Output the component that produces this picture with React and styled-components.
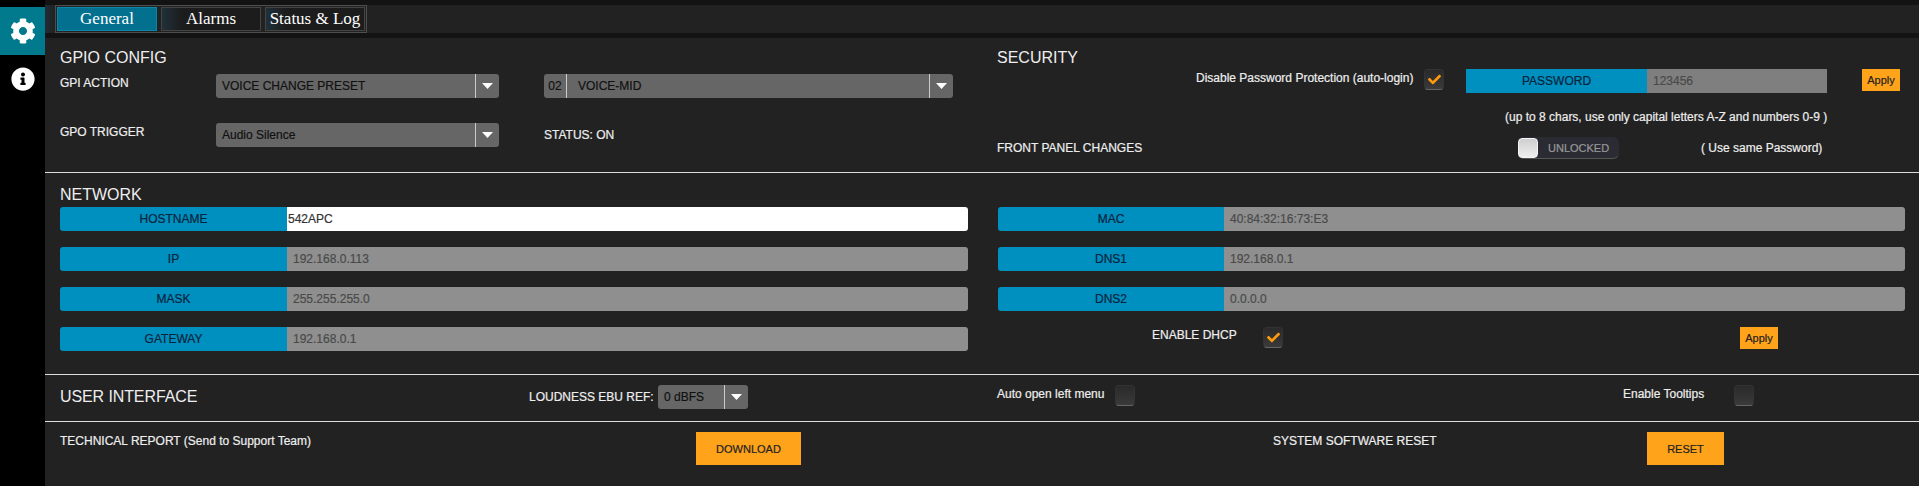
import React from "react";
import styled, { createGlobalStyle } from "styled-components";
import { FaCog, FaInfoCircle, FaCheck } from "react-icons/fa";

const GlobalStyle = createGlobalStyle`
  html, body {
    margin: 0;
    padding: 0;
    background: #000;
    font-family: "Liberation Sans", Arial, sans-serif;
  }
`;

const leftFields = [
  { label: "HOSTNAME", value: "542APC", editable: true },
  { label: "IP", value: "192.168.0.113" },
  { label: "MASK", value: "255.255.255.0" },
  { label: "GATEWAY", value: "192.168.0.1" },
];

const rightFields = [
  { label: "MAC", value: "40:84:32:16:73:E3" },
  { label: "DNS1", value: "192.168.0.1" },
  { label: "DNS2", value: "0.0.0.0" },
];

const Select = ({ value, prefix, width }) => (
  <SelectBox $width={width}>
    {prefix && <SelectPrefix>{prefix}</SelectPrefix>}
    <SelectValue $indent={prefix ? 11 : 6}>{value}</SelectValue>
    <SelectArrow>
      <svg width="11" height="6" viewBox="0 0 11 6">
        <path d="M0 0h11L5.5 6z" fill="#fff" />
      </svg>
    </SelectArrow>
  </SelectBox>
);

const Check = ({ checked }) => (
  <CheckBox>{checked && <FaCheck size={13} color="#ff9a0d" />}</CheckBox>
);

const Field = ({ label, value, editable, labelWidth }) => (
  <FieldRow>
    <FieldLabel $width={labelWidth}>{label}</FieldLabel>
    <FieldValue $editable={editable}>{value}</FieldValue>
  </FieldRow>
);

const App = () => {
  return (
    <Page>
      <GlobalStyle />
      <Sidebar>
        <SideItem $active>
          <FaCog size={26} />
        </SideItem>
        <SideItem>
          <FaInfoCircle size={24} />
        </SideItem>
      </Sidebar>
      <Main>
        <DarkStrip />
        <TabBar>
          <TabGroup>
            <Tab $active>General</Tab>
            <Tab>Alarms</Tab>
            <Tab>Status &amp; Log</Tab>
          </TabGroup>
        </TabBar>
        <DarkStrip />

        <TopSection>
          <Column>
            <Heading>GPIO CONFIG</Heading>
            <GpioGrid>
              <GpioLabel>GPI ACTION</GpioLabel>
              <Select value="VOICE CHANGE PRESET" />
              <PresetCell>
                <Select value="VOICE-MID" prefix="02" />
              </PresetCell>
              <GpioLabel>GPO TRIGGER</GpioLabel>
              <Select value="Audio Silence" />
              <PresetCell>
                <Label>STATUS: ON</Label>
              </PresetCell>
            </GpioGrid>
          </Column>
          <Column>
            <Heading>SECURITY</Heading>
            <PasswordRow>
              <DisableLabel>Disable Password Protection (auto-login)</DisableLabel>
              <Check checked />
              <PasswordBox>
                <PasswordLabel>PASSWORD</PasswordLabel>
                <PasswordValue>123456</PasswordValue>
              </PasswordBox>
              <ApplyButton>Apply</ApplyButton>
            </PasswordRow>
            <Hint>(up to 8 chars, use only capital letters A-Z and numbers 0-9 )</Hint>
            <PanelRow>
              <PanelLabel>FRONT PANEL CHANGES</PanelLabel>
              <Toggle>
                <ToggleKnob />
                <ToggleText>UNLOCKED</ToggleText>
              </Toggle>
              <SamePassword>( Use same Password)</SamePassword>
            </PanelRow>
          </Column>
        </TopSection>

        <NetworkSection>
          <Column>
            <NetworkHeading>NETWORK</NetworkHeading>
            <FieldStack $width={908}>
              {leftFields.map((f) => (
                <Field key={f.label} {...f} labelWidth={227} />
              ))}
            </FieldStack>
          </Column>
          <RightNetwork>
            <FieldStack $width={907}>
              {rightFields.map((f) => (
                <Field key={f.label} {...f} labelWidth={226} />
              ))}
            </FieldStack>
            <DhcpRow>
              <DhcpLabel>ENABLE DHCP</DhcpLabel>
              <Check checked />
              <DhcpApply>Apply</DhcpApply>
            </DhcpRow>
          </RightNetwork>
        </NetworkSection>

        <InterfaceSection>
          <InterfaceLeft>
            <InterfaceHeading>USER INTERFACE</InterfaceHeading>
            <LoudnessLabel>LOUDNESS EBU REF:</LoudnessLabel>
            <Select value="0 dBFS" width={90} />
          </InterfaceLeft>
          <InterfaceRight>
            <AutoOpen>
              <BottomLabel>Auto open left menu</BottomLabel>
              <Check />
            </AutoOpen>
            <Tooltips>
              <BottomLabel>Enable Tooltips</BottomLabel>
              <Check />
            </Tooltips>
          </InterfaceRight>
        </InterfaceSection>

        <BottomSection>
          <ReportCell>
            <BottomLabel>TECHNICAL REPORT (Send to Support Team)</BottomLabel>
            <BigButton $width={105}>DOWNLOAD</BigButton>
          </ReportCell>
          <ResetCell>
            <BottomLabel>SYSTEM SOFTWARE RESET</BottomLabel>
            <BigButton $width={77}>RESET</BigButton>
          </ResetCell>
        </BottomSection>
      </Main>
    </Page>
  );
};

const Page = styled.div`
  display: flex;
  width: 1919px;
  height: 486px;
  overflow: hidden;
  color: #eee;
  font-size: 12px;
  -webkit-text-stroke: 0.2px currentColor;
`;

const Sidebar = styled.nav`
  width: 45px;
  flex-shrink: 0;
  padding-top: 7px;
  background: #000;
  display: flex;
  flex-direction: column;
`;

const SideItem = styled.div`
  height: 48px;
  display: flex;
  align-items: center;
  justify-content: center;
  color: #fff;
  background: ${(p) => (p.$active ? "#007a8c" : "transparent")};
`;

const Main = styled.main`
  flex: 1;
  background: #222;
  display: flex;
  flex-direction: column;
`;

const DarkStrip = styled.div`
  height: 5px;
  background: #131313;
`;

const TabBar = styled.div`
  height: 28px;
  padding-left: 10px;
  background: linear-gradient(90deg, #1f2c36, #222 10px);
`;

const TabGroup = styled.div`
  display: inline-flex;
  gap: 4px;
  height: 28px;
  box-sizing: border-box;
  padding: 1px;
  border: 1px solid #4e4e4e;
`;

const Tab = styled.div`
  width: 100px;
  box-sizing: border-box;
  display: flex;
  align-items: center;
  justify-content: center;
  font-family: "Liberation Serif", "Times New Roman", serif;
  font-size: 17px;
  color: #fff;
  -webkit-text-stroke: 0;
  background: ${(p) =>
    p.$active ? "#04708f" : "linear-gradient(90deg, #20303a, #1c1c1c 20px)"};
  border: 1px solid ${(p) => (p.$active ? "#0a86a8" : "#444")};
`;

const TopSection = styled.section`
  height: 134px;
  display: grid;
  grid-template-columns: 937px 1fr;
  padding-left: 15px;
  border-bottom: 1px solid #ddd;
`;

const Column = styled.div`
  min-width: 0;
`;

const Heading = styled.h2`
  margin: 11px 0 0;
  font-size: 16px;
  line-height: 18px;
  font-weight: 400;
  color: #eee;
  -webkit-text-stroke: 0;
`;

const GpioGrid = styled.div`
  display: grid;
  grid-template-columns: 156px 283px 454px;
  row-gap: 25px;
  margin-top: 7px;
`;

const Label = styled.span`
  font-size: 12px;
  line-height: 17px;
  color: #eee;
  white-space: nowrap;
`;

const GpioLabel = styled(Label)`
  padding-top: 1px;
`;

const PresetCell = styled.div`
  display: flex;
  flex-direction: column;
  justify-content: center;
  padding-left: 45px;
`;

const SelectBox = styled.div`
  display: flex;
  align-items: stretch;
  height: 24px;
  box-sizing: border-box;
  width: ${(p) => (p.$width ? `${p.$width}px` : "auto")};
  background: #666;
  border-radius: 3px;
  color: #111;
  font-size: 12px;
  line-height: 24px;
`;

const SelectPrefix = styled.span`
  width: 23px;
  box-sizing: border-box;
  text-align: center;
  border-right: 1px solid #ccc;
`;

const SelectValue = styled.span`
  flex: 1;
  padding-left: ${(p) => p.$indent}px;
  white-space: nowrap;
`;

const SelectArrow = styled.span`
  width: 24px;
  box-sizing: border-box;
  display: flex;
  align-items: center;
  justify-content: center;
  border-left: 1px solid #ccc;
`;

const PasswordRow = styled.div`
  display: flex;
  align-items: flex-start;
  margin-top: 2px;
  padding-left: 199px;
`;

const DisableLabel = styled(Label)`
  width: 228px;
  margin-top: 1px;
`;

const CheckBox = styled.span`
  width: 20px;
  height: 21px;
  flex-shrink: 0;
  display: flex;
  align-items: center;
  justify-content: center;
  box-sizing: border-box;
  border-radius: 4px;
  background: linear-gradient(#2a2a2a, #3a3a3a);
  border: 1px solid #333;
  border-bottom-color: #666;
`;

const PasswordBox = styled.div`
  display: flex;
  width: 361px;
  height: 24px;
  margin-left: 22px;
  line-height: 24px;
`;

const PasswordLabel = styled.span`
  width: 181px;
  text-align: center;
  background: #0090bf;
  color: #08233c;
`;

const PasswordValue = styled.span`
  flex: 1;
  padding-left: 6px;
  background: #7f7f7f;
  color: #4a4a4a;
`;

const ApplyButton = styled.button`
  width: 38px;
  height: 22px;
  margin-left: 35px;
  padding: 0;
  border: none;
  background: #ffa31a;
  color: #222;
  font-family: inherit;
  font-size: 11px;
`;

const Hint = styled.div`
  margin: 16px 0 0 508px;
  line-height: 17px;
  white-space: nowrap;
`;

const PanelRow = styled.div`
  display: flex;
  align-items: center;
  height: 22px;
  margin-top: 11px;
`;

const PanelLabel = styled(Label)`
  width: 521px;
`;

const Toggle = styled.div`
  width: 101px;
  height: 22px;
  box-sizing: border-box;
  display: flex;
  align-items: center;
  border-radius: 6px;
  background: #2b2b33;
  border-bottom: 1px solid #555;
`;

const ToggleKnob = styled.span`
  width: 20px;
  height: 20px;
  box-sizing: border-box;
  border-radius: 4px;
  border: 1px solid #f4f4f4;
  background: linear-gradient(#cfcfcf, #eee);
`;

const ToggleText = styled.span`
  margin-left: 10px;
  font-size: 11px;
  color: #999;
`;

const SamePassword = styled(Label)`
  margin-left: 82px;
`;

const NetworkSection = styled.section`
  height: 201px;
  display: grid;
  grid-template-columns: 937px 1fr;
  padding-left: 15px;
  border-bottom: 1px solid #ddd;
`;

const NetworkHeading = styled(Heading)`
  margin-top: 13px;
`;

const RightNetwork = styled.div`
  padding: 31px 0 0 1px;
`;

const FieldStack = styled.div`
  display: flex;
  flex-direction: column;
  gap: 16px;
  margin-top: 3px;
  width: ${(p) => p.$width}px;
`;

const FieldRow = styled.div`
  display: flex;
  height: 24px;
  border-radius: 3px;
  overflow: hidden;
  line-height: 24px;
`;

const FieldLabel = styled.span`
  width: ${(p) => p.$width}px;
  flex-shrink: 0;
  text-align: center;
  background: #0090bf;
  color: #08233c;
`;

const FieldValue = styled.span`
  flex: 1;
  padding-left: ${(p) => (p.$editable ? 1 : 6)}px;
  background: ${(p) => (p.$editable ? "#fff" : "#8f8f8f")};
  color: ${(p) => (p.$editable ? "#333" : "#4a4a4a")};
`;

const DhcpRow = styled.div`
  display: flex;
  align-items: flex-start;
  margin-top: 16px;
  padding-left: 154px;
`;

const DhcpLabel = styled(Label)`
  width: 111px;
`;

const DhcpApply = styled(ApplyButton)`
  margin-left: 457px;
`;

const InterfaceSection = styled.section`
  height: 44px;
  padding: 0 0 2px 15px;
  display: grid;
  grid-template-columns: 937px 1fr;
  border-bottom: 1px solid #ddd;
`;

const InterfaceLeft = styled.div`
  display: flex;
  align-items: center;
`;

const InterfaceHeading = styled(Heading)`
  width: 469px;
  margin: 0;
  letter-spacing: -0.1px;
`;

const LoudnessLabel = styled(Label)`
  width: 129px;
`;

const InterfaceRight = styled.div`
  display: flex;
  align-items: flex-start;
  padding-top: 10px;
`;

const AutoOpen = styled.div`
  display: flex;
  gap: 11px;
  width: 626px;
`;

const Tooltips = styled.div`
  display: flex;
  gap: 30px;
`;

const BottomSection = styled.section`
  display: grid;
  grid-template-columns: 937px 1fr;
  padding: 10px 0 0 15px;
`;

const ReportCell = styled.div`
  display: flex;
  align-items: flex-start;
  justify-content: space-between;
  width: 741px;
`;

const ResetCell = styled.div`
  display: flex;
  align-items: flex-start;
  justify-content: space-between;
  width: 451px;
  margin-left: 276px;
`;

const BottomLabel = styled(Label)`
  padding-top: 1px;
`;

const BigButton = styled.button`
  width: ${(p) => p.$width}px;
  height: 33px;
  padding: 0;
  border: none;
  background: #ffa31a;
  color: #222;
  font-family: inherit;
  font-size: 11px;
`;

export default App;
